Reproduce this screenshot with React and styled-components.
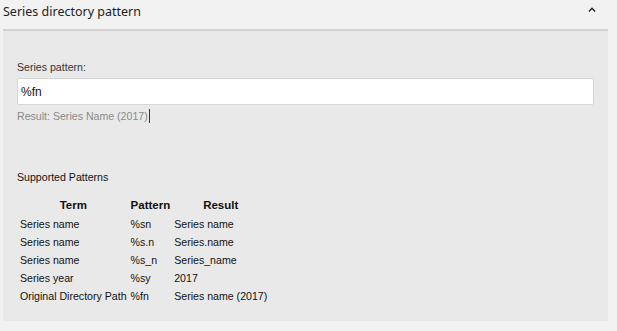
import React from "react";
import styled, { createGlobalStyle } from "styled-components";

const Global = createGlobalStyle`
  html, body { margin: 0; padding: 0; background: #f2f2f2; }
  body { font-family: "Liberation Sans", Arial, sans-serif; }
`;

const Page = styled.div`
  width: 617px;
  height: 331px;
  background: #f2f2f2;
  box-sizing: border-box;
  padding: 0 9px 0 3px;
`;

const Header = styled.div`
  display: flex;
  align-items: center;
  justify-content: space-between;
  height: 29px;
  box-sizing: border-box;
  padding: 0 12px 7px 0;
`;

const Title = styled.span`
  font-family: "Noto Sans", "Open Sans", sans-serif;
  font-size: 12.5px;
  color: #222;
`;

const Chevron = styled.svg`
  margin-top: -4px;
`;

const Panel = styled.div`
  background: #e9e9e9;
  border-top: 2px solid #d2d2d2;
  padding: 30px 14px 20px 14px;
  height: 292px;
  box-sizing: border-box;
`;

const Label = styled.div`
  font-size: 10.6px;
  color: #333;
  margin-bottom: 5px;
`;

const Input = styled.div`
  height: 27px;
  box-sizing: border-box;
  background: #fff;
  border: 1px solid #d6d6d6;
  border-radius: 2px;
  display: flex;
  align-items: center;
  padding-left: 3px;
  font-size: 12px;
  color: #111;
`;

const Result = styled.div`
  margin-top: 4px;
  font-size: 10.6px;
  color: #8a8a8a;
  display: flex;
  align-items: center;
`;

const Caret = styled.span`
  display: inline-block;
  width: 1px;
  height: 14px;
  background: #333;
  margin-left: 1px;
`;

const SectionTitle = styled.div`
  margin-top: 48px;
  font-size: 10.6px;
  color: #111;
`;

const Table = styled.table`
  margin-top: 12px;
  font-size: 10.6px;
  color: #111;
  border-spacing: 2px;
`;

const Th = styled.th`
  font-size: 11.5px;
  font-weight: bold;
  padding: 1px;
  line-height: 15px;
`;

const Td = styled.td`
  padding: 1px;
  line-height: 14px;
  white-space: nowrap;
`;

const rows = [
  ["Series name", "%sn", "Series name"],
  ["Series name", "%s.n", "Series.name"],
  ["Series name", "%s_n", "Series_name"],
  ["Series year", "%sy", "2017"],
  ["Original Directory Path", "%fn", "Series name (2017)"],
];

export default function App() {
  return (
    <Page>
      <Global />
      <Header>
        <Title>Series directory pattern</Title>
        <Chevron width="8" height="5" viewBox="0 0 8 5">
          <path d="M1 4.5 L4 1.2 L7 4.5" fill="none" stroke="#222" strokeWidth="1.3" />
        </Chevron>
      </Header>
      <Panel>
        <Label>Series pattern:</Label>
        <Input>%fn</Input>
        <Result>
          Result: Series Name (2017)
          <Caret />
        </Result>
        <SectionTitle>Supported Patterns</SectionTitle>
        <Table>
          <thead>
            <tr>
              <Th>Term</Th>
              <Th>Pattern</Th>
              <Th>Result</Th>
            </tr>
          </thead>
          <tbody>
            {rows.map((r, i) => (
              <tr key={i}>
                {r.map((c, j) => (
                  <Td key={j}>{c}</Td>
                ))}
              </tr>
            ))}
          </tbody>
        </Table>
      </Panel>
    </Page>
  );
}
